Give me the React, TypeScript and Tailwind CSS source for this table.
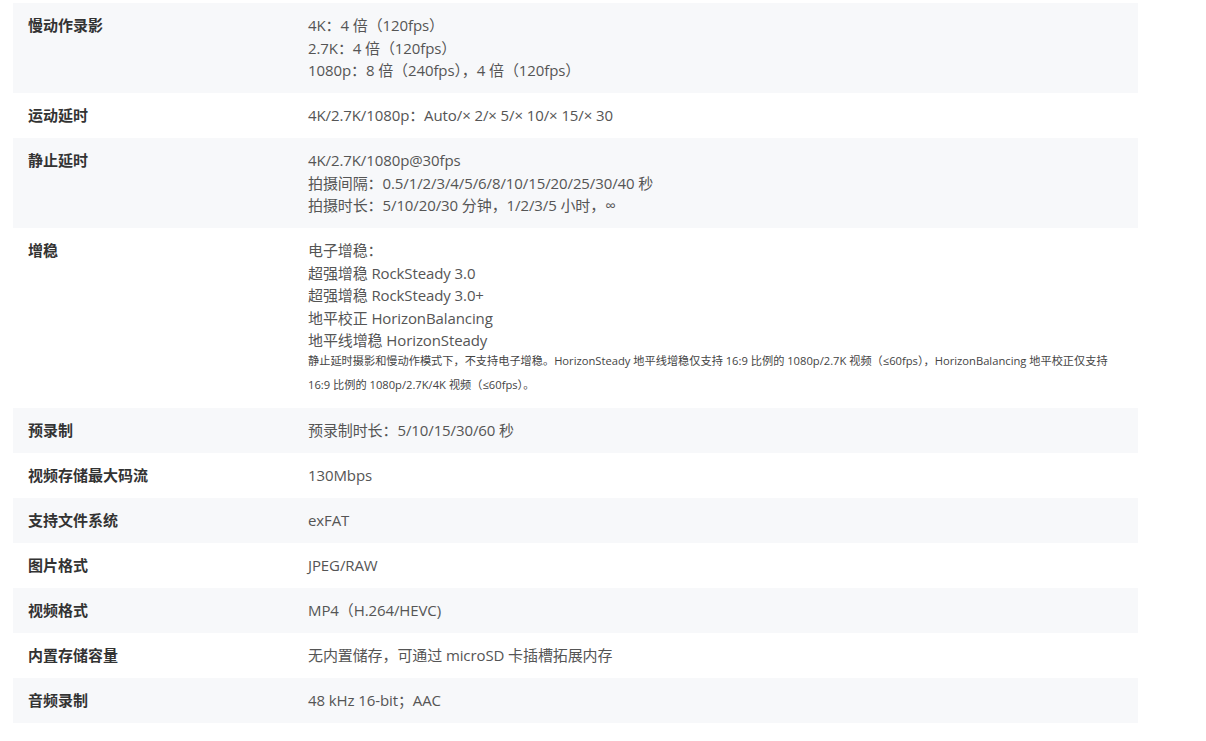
import React from "react";

type Row = { label: string; lines: string[]; note?: string };

const rows: Row[] = [
  { label: "慢动作录影", lines: ["4K：4 倍（120fps）", "2.7K：4 倍（120fps）", "1080p：8 倍（240fps），4 倍（120fps）"] },
  { label: "运动延时", lines: ["4K/2.7K/1080p：Auto/× 2/× 5/× 10/× 15/× 30"] },
  { label: "静止延时", lines: ["4K/2.7K/1080p@30fps", "拍摄间隔：0.5/1/2/3/4/5/6/8/10/15/20/25/30/40 秒", "拍摄时长：5/10/20/30 分钟，1/2/3/5 小时，∞"] },
  {
    label: "增稳",
    lines: ["电子增稳：", "超强增稳 RockSteady 3.0", "超强增稳 RockSteady 3.0+", "地平校正 HorizonBalancing", "地平线增稳 HorizonSteady"],
    note: "静止延时摄影和慢动作模式下，不支持电子增稳。HorizonSteady 地平线增稳仅支持 16:9 比例的 1080p/2.7K 视频（≤60fps），HorizonBalancing 地平校正仅支持 16:9 比例的 1080p/2.7K/4K 视频（≤60fps）。",
  },
  { label: "预录制", lines: ["预录制时长：5/10/15/30/60 秒"] },
  { label: "视频存储最大码流", lines: ["130Mbps"] },
  { label: "支持文件系统", lines: ["exFAT"] },
  { label: "图片格式", lines: ["JPEG/RAW"] },
  { label: "视频格式", lines: ["MP4（H.264/HEVC)"] },
  { label: "内置存储容量", lines: ["无内置储存，可通过 microSD 卡插槽拓展内存"] },
  { label: "音频录制", lines: ["48 kHz 16-bit；AAC"] },
];

export default function App() {
  return (
    <div
      className="min-h-[741px] w-[1206px] bg-white pt-[3px]"
      style={{ fontFamily: '"Open Sans", "Noto Sans CJK SC", sans-serif' }}
    >
      <div className="ml-[13px] flex w-[1125px] flex-col">
        {rows.map((r, i) => (
          <div
            key={i}
            className={`flex py-[11.25px] text-[15px] leading-[22.5px] ${i % 2 === 0 ? "bg-[#f7f8fa]" : "bg-white"}`}
          >
            <div className="w-[295px] shrink-0 pl-[15px] font-bold text-[#333333]">{r.label}</div>
            <div className="flex-1 pr-[20px] tracking-[-0.1px] text-[#555555]">
              {r.lines.map((l, j) => (
                <div key={j}>{l}</div>
              ))}
              {r.note && (
                <div className="mt-[-3px] pr-[6px] text-[11.2px] leading-[24px] tracking-normal text-[#444444]">{r.note}</div>
              )}
            </div>
          </div>
        ))}
      </div>
    </div>
  );
}
